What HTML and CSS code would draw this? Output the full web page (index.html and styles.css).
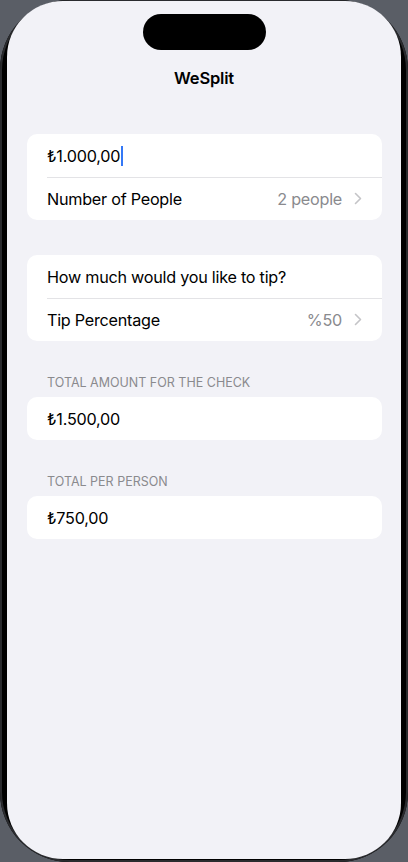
FILE: index.html
```html
<!DOCTYPE html>
<html>
<head>
<meta charset="utf-8">
<link rel="stylesheet" href="styles.css">
</head>
<body>
<div class="device">
  <div class="screen">
    <div class="island"></div>
    <div class="navtitle">WeSplit</div>
    <div class="content">
      <div class="card">
        <div class="row"><span class="amount">₺1.000,00</span><span class="cursor"></span></div>
        <div class="row">
          <span class="label">Number of People</span>
          <span class="value">2 people</span>
          <svg class="chev" width="8" height="13" viewBox="0 0 8 13"><path d="M1.5 1.5 L6.5 6.5 L1.5 11.5" fill="none" stroke="#c4c4c7" stroke-width="1.6" stroke-linecap="round" stroke-linejoin="round"/></svg>
        </div>
      </div>
      <div class="card">
        <div class="row"><span class="label">How much would you like to tip?</span></div>
        <div class="row">
          <span class="label">Tip Percentage</span>
          <span class="value">%50</span>
          <svg class="chev" width="8" height="13" viewBox="0 0 8 13"><path d="M1.5 1.5 L6.5 6.5 L1.5 11.5" fill="none" stroke="#c4c4c7" stroke-width="1.6" stroke-linecap="round" stroke-linejoin="round"/></svg>
        </div>
      </div>
      <div class="section">
        <div class="header">TOTAL AMOUNT FOR THE CHECK</div>
        <div class="card"><div class="row"><span class="label">₺1.500,00</span></div></div>
      </div>
      <div class="section">
        <div class="header">TOTAL PER PERSON</div>
        <div class="card"><div class="row"><span class="label">₺750,00</span></div></div>
      </div>
    </div>
  </div>
</div>
</body>
</html>
```
FILE: styles.css
```css
html, body {
  margin: 0;
  padding: 0;
  width: 408px;
  height: 862px;
  overflow: hidden;
  background: #5a5e66;
  font-family: Inter, "Noto Sans", "DejaVu Sans", sans-serif;
}
.device {
  box-sizing: border-box;
  width: 408px;
  height: 862px;
  background: #000;
  border-radius: 70px;
  box-shadow: inset 0 0 0 2px #2a2b2e;
  padding: 1px 7px 3px 7px;
}
.screen {
  position: relative;
  box-sizing: border-box;
  height: 100%;
  background: #f2f2f7;
  border-radius: 56px;
  overflow: hidden;
  display: flex;
  flex-direction: column;
}
.island {
  position: absolute;
  left: 136px;
  top: 13px;
  width: 123px;
  height: 36px;
  border-radius: 18px;
  background: #000;
}
.navtitle {
  margin-top: 66px;
  height: 22px;
  line-height: 22px;
  text-align: center;
  font-weight: 600;
  font-size: 16.5px;
  color: #000;
  letter-spacing: -0.2px;
}
.content {
  margin-top: 45px;
  padding: 0 19px 0 20px;
  display: flex;
  flex-direction: column;
  gap: 35px;
}
.card {
  background: #fff;
  border-radius: 10px;
  overflow: hidden;
}
.row {
  position: relative;
  height: 43px;
  display: flex;
  align-items: center;
  padding: 0 20px 0 20px;
  font-size: 16.2px;
  color: #000;
  letter-spacing: -0.25px;
}
.row + .row::before {
  content: "";
  position: absolute;
  left: 20px;
  right: 0;
  top: 0;
  height: 1px;
  background: #e3e3e6;
}
.label { flex: 1; }
.value {
  color: #8a8a8e;
  margin-right: 12px;
}
.chev { display: block; }
.cursor {
  width: 2px;
  height: 20px;
  background: #3478f6;
  margin-left: 1px;
}
.section {
  display: flex;
  flex-direction: column;
}
.header {
  font-size: 12.5px;
  color: #8a8a8e;
  letter-spacing: 0;
  padding: 0 20px;
  height: 15px;
  line-height: 15px;
  margin-top: -1px;
  margin-bottom: 7px;
}
```
